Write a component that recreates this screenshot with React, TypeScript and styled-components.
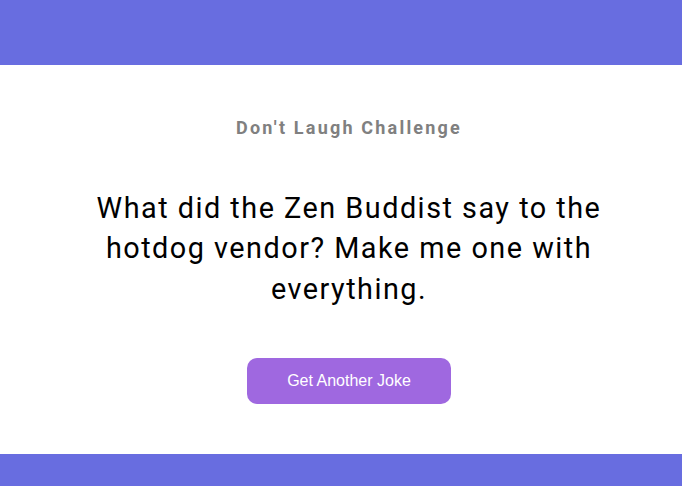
import React from "react";
import styled, { createGlobalStyle } from "styled-components";

const Global = createGlobalStyle`
  html, body { margin: 0; padding: 0; background: #686de0; }
  body { font-family: Roboto, "Noto Sans", sans-serif; }
  * { box-sizing: border-box; }
`;

const Page = styled.div`
  padding: 65px 0 40px;
`;

const Card = styled.main`
  background: #ffffff;
  height: 389px;
  padding: 52px 0 0 16px;
  display: flex;
  flex-direction: column;
  align-items: center;
`;

const Content = styled.div`
  width: 560px;
  display: flex;
  flex-direction: column;
  align-items: center;
  text-align: center;
`;

const Title = styled.h3`
  margin: 0;
  font-size: 18px;
  font-weight: 700;
  letter-spacing: 2.2px;
  color: #808080;
  line-height: 21px;
`;

const Joke = styled.p`
  margin: 50px 0 0;
  font-size: 28.8px;
  line-height: 1.4;
  letter-spacing: 1.5px;
  color: #000;
  font-weight: 400;
`;

const Button = styled.button`
  margin-top: 49px;
  width: 204px;
  height: 46px;
  border: none;
  border-radius: 10px;
  background: #9f68e0;
  color: #fff;
  font-family: "Liberation Sans", Arial, sans-serif;
  font-size: 16px;
  cursor: pointer;
`;

export default function App() {
  return (
    <>
      <Global />
      <Page>
        <Card>
          <Content>
            <Title>Don't Laugh Challenge</Title>
            <Joke>
              What did the Zen Buddist say to the hotdog vendor? Make me one with everything.
            </Joke>
            <Button>Get Another Joke</Button>
          </Content>
        </Card>
      </Page>
    </>
  );
}
